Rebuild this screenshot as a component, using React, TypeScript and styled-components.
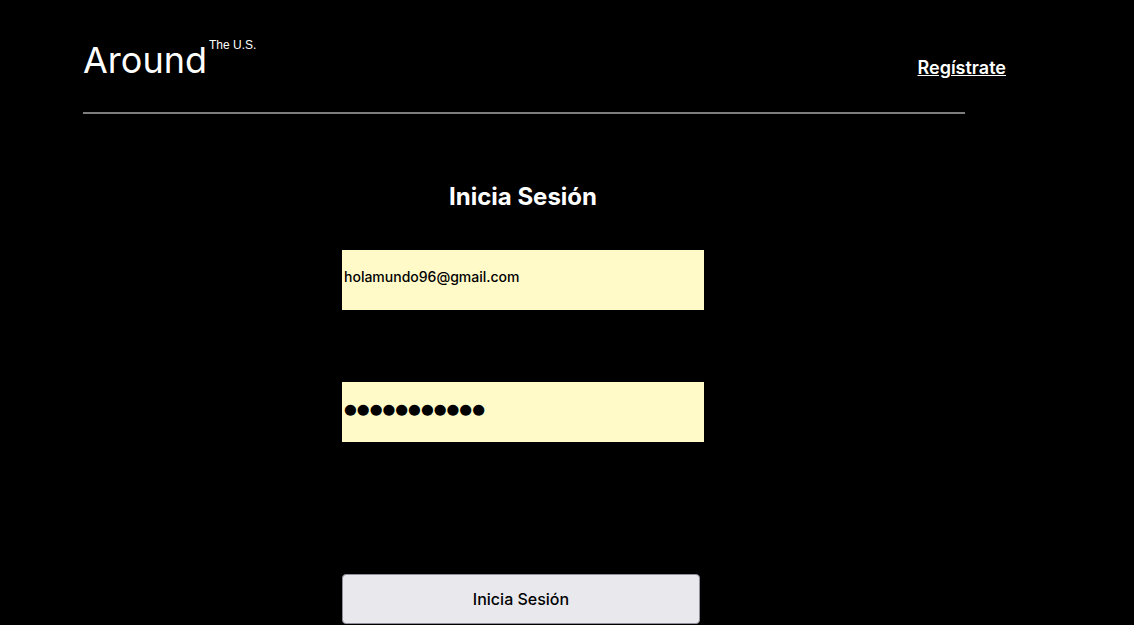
import React from "react";
import styled, { createGlobalStyle } from "styled-components";

const Global = createGlobalStyle`
  html, body { margin: 0; padding: 0; background: #000; }
  body { font-family: Inter, "Noto Sans", sans-serif; color: #fff; }
`;

const Page = styled.div`
  width: 1134px;
  height: 625px;
  overflow: hidden;
  background: #000;
  padding-left: 83px;
  box-sizing: border-box;
`;

const Header = styled.header`
  display: flex;
  justify-content: space-between;
  align-items: flex-start;
  width: 923px;
  padding-top: 38px;
  height: 112px;
  box-sizing: border-box;
`;

const Logo = styled.div`
  display: flex;
  align-items: flex-start;
`;

const LogoMain = styled.span`
  font-family: Inter, sans-serif;
  font-size: 36px;
  line-height: 45px;
  font-weight: 400;
`;

const LogoSup = styled.span`
  font-family: "Liberation Sans", Arial, sans-serif;
  font-size: 12px;
  line-height: 14px;
  margin-left: 2px;
`;

const NavLink = styled.a`
  font-family: Inter, sans-serif;
  font-size: 18px;
  font-weight: 600;
  color: #fff;
  text-decoration: underline;
  margin-top: 19px;
`;

const Divider = styled.hr`
  width: 882px;
  margin: 0;
  border: none;
  height: 2px;
  background: #7d7d7d;
`;

const Form = styled.form`
  width: 880px;
  display: flex;
  flex-direction: column;
  align-items: center;
`;

const Title = styled.h2`
  font-size: 24px;
  font-weight: 700;
  margin: 68px 0 0;
  line-height: 29px;
`;

const Field = styled.input<{ $gap: number; $mask?: boolean }>`
  width: 362px;
  height: 60px;
  box-sizing: border-box;
  border: none;
  outline: none;
  background: #fffac8;
  color: #000;
  font-family: ${(p) => (p.$mask ? '"DejaVu Sans", sans-serif' : "Inter, sans-serif")};
  font-size: ${(p) => (p.$mask ? "14.7px" : "14px")};
  font-weight: 500;
  padding: 0 2px 8px;
  margin-top: ${(p) => p.$gap}px;
`;

const Submit = styled.button`
  width: 358px;
  height: 50px;
  margin-top: 132px;
  margin-right: 4px;
  background: #e9e9ed;
  border: 1px solid #8f8f9d;
  border-radius: 4px;
  font-family: Inter, sans-serif;
  font-size: 16px;
  font-weight: 500;
  color: #000;
`;

export default function App() {
  return (
    <Page>
      <Global />
      <Header>
        <Logo>
          <LogoMain>Around</LogoMain>
          <LogoSup>The U.S.</LogoSup>
        </Logo>
        <NavLink href="#">Regístrate</NavLink>
      </Header>
      <Divider />
      <Form onSubmit={(e) => e.preventDefault()}>
        <Title>Inicia Sesión</Title>
        <Field type="email" $gap={39} defaultValue="holamundo96@gmail.com" />
        <Field type="text" $gap={72} $mask readOnly aria-label="Contraseña" value="●●●●●●●●●●●" />
        <Submit type="submit">Inicia Sesión</Submit>
      </Form>
    </Page>
  );
}
